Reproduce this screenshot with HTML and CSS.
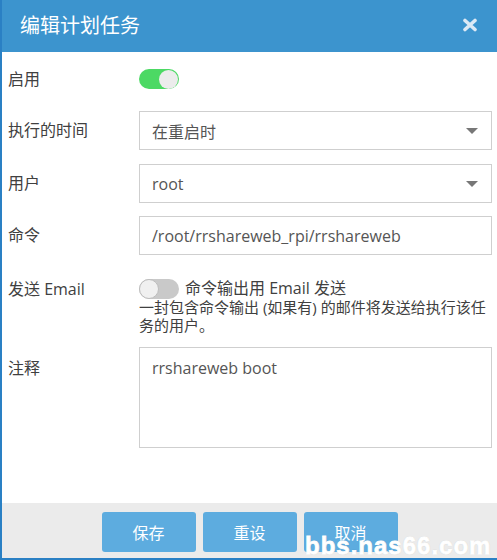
FILE: index.html
```html
<!DOCTYPE html>
<html lang="zh-CN">
<head>
<meta charset="utf-8">
<title>编辑计划任务</title>
<link rel="stylesheet" href="styles.css">
</head>
<body>
<div class="modal">
  <header class="modal-header">
    <h1 class="title">编辑计划任务</h1>
    <span class="close" aria-label="关闭">
      <svg width="16" height="14" viewBox="0 0 16 14"><path d="M3 2.5 L13 11.5 M13 2.5 L3 11.5" stroke="#dce9f5" stroke-width="3.6" stroke-linecap="round"/></svg>
    </span>
  </header>
  <div class="form">
    <div class="row row-toggle r1">
      <div class="label">启用</div>
      <div class="control"><span class="switch switch-on"><span class="knob"></span></span></div>
    </div>
    <div class="row row-field r2">
      <div class="label">执行的时间</div>
      <div class="field select"><span>在重启时</span><svg class="caret" width="12" height="6" viewBox="0 0 12 6"><path d="M0 0 H12 L6 6 Z" fill="#777"/></svg></div>
    </div>
    <div class="row row-field r3">
      <div class="label">用户</div>
      <div class="field select"><span>root</span><svg class="caret" width="12" height="6" viewBox="0 0 12 6"><path d="M0 0 H12 L6 6 Z" fill="#777"/></svg></div>
    </div>
    <div class="row row-field r4">
      <div class="label">命令</div>
      <div class="field">/root/rrshareweb_rpi/rrshareweb</div>
    </div>
    <div class="row row-toggle r5">
      <div class="label">发送 Email</div>
      <div class="control">
        <div class="switch-line"><span class="switch switch-off"><span class="knob"></span></span><span class="switch-text">命令输出用 Email 发送</span></div>
        <div class="help">一封包含命令输出 (如果有) 的邮件将发送给执行该任务的用户。</div>
      </div>
    </div>
    <div class="row row-area r6">
      <div class="label">注释</div>
      <div class="field textarea">rrshareweb boot</div>
    </div>
  </div>
  <footer class="modal-footer">
    <button class="btn">保存</button>
    <button class="btn">重设</button>
    <button class="btn">取消</button>
  </footer>
  <div class="watermark">bbs.nas66.com</div>
</div>
</body>
</html>
```
FILE: styles.css
```css
* { box-sizing: border-box; }
html, body { margin: 0; padding: 0; background: #fff; }
body {
  font-family: "Open Sans", "Noto Sans CJK SC", sans-serif;
  color: #333;
}
.modal {
  position: relative;
  width: 497px;
  height: 560px;
  display: flex;
  flex-direction: column;
  border-left: 2px solid #2a80c4;
  border-bottom: 2px solid #2a80c4;
  overflow: hidden;
}
.modal-header {
  height: 52px;
  flex: none;
  margin-left: -2px;
  background: #3c94ce;
  display: flex;
  align-items: center;
  justify-content: space-between;
  padding: 0 19px 2px 20px;
}
.title {
  margin: 0;
  font-size: 20px;
  font-weight: normal;
  color: #fff;
  font-family: "Noto Sans CJK SC", sans-serif;
  line-height: 24px;
}
.close { display: flex; }
.form {
  flex: 1;
  padding: 17px 5px 0 6px;
  display: flex;
  flex-direction: column;
}
.row {
  display: grid;
  grid-template-columns: 131px 1fr;
  align-items: start;
}
.label {
  font-size: 16px;
  color: #404040;
  font-family: "Open Sans", "Noto Sans CJK SC", sans-serif;
}
.row-toggle .label { line-height: 20px; }
.row-field .label { line-height: 39px; }
.row-area .label { line-height: 20px; padding-top: 11px; }
.r2 { margin-top: 22px; }
.r3 { margin-top: 14px; }
.r4 { margin-top: 13px; }
.r5 { margin-top: 24px; }
.r6 { margin-top: 13px; }

.switch {
  width: 40px;
  height: 20px;
  border-radius: 10px;
  display: flex;
  align-items: center;
  padding: 0 1px;
  flex: none;
}
.switch-on { background: #4cd964; justify-content: flex-end; }
.switch-off { background: #c9c9c9; justify-content: flex-start; padding: 0; }
.knob {
  width: 19px;
  height: 19px;
  border-radius: 50%;
  background: #ececec;
}
.switch-off .knob { width: 20px; height: 20px; border: 1px solid #bdbdbd; background: #f0f0f0; }
.control { display: block; }
.switch-line { display: flex; align-items: flex-start; height: 18px; }
.switch-text { margin-left: 6px; font-size: 16px; color: #404040; line-height: 19px; white-space: nowrap; }
.help {
  margin-top: 1px;
  font-size: 15px;
  line-height: 18px;
  color: #404040;
}

.field {
  height: 39px;
  border: 1px solid #cfcfcf;
  padding: 0 13px 0 12px;
  display: flex;
  align-items: center;
  justify-content: space-between;
  font-size: 16px;
  color: #555;
  white-space: nowrap;
}
.textarea {
  height: 101px;
  align-items: flex-start;
  padding: 9px 12px;
  line-height: 22px;
}
.caret { flex: none; }

.modal-footer {
  height: 55px;
  flex: none;
  background: #ebebeb;
  display: flex;
  justify-content: center;
  align-items: flex-start;
  gap: 7px;
  padding-top: 9px;
}
.btn {
  width: 94px;
  height: 40px;
  border: none;
  border-radius: 3px;
  background: #5dacdf;
  color: #fff;
  font-size: 16px;
  font-family: "Noto Sans CJK SC", sans-serif;
  padding: 0;
}
.watermark {
  position: absolute;
  left: 303px;
  top: 534px;
  font-family: "Liberation Sans", Arial, sans-serif;
  font-weight: bold;
  font-size: 24px;
  line-height: 24px;
  letter-spacing: 1px;
  color: #fff;
  -webkit-text-stroke: 0.8px #fff;
  text-shadow: 0 0 1px rgba(0,0,0,0.35);
  white-space: nowrap;
}
```
